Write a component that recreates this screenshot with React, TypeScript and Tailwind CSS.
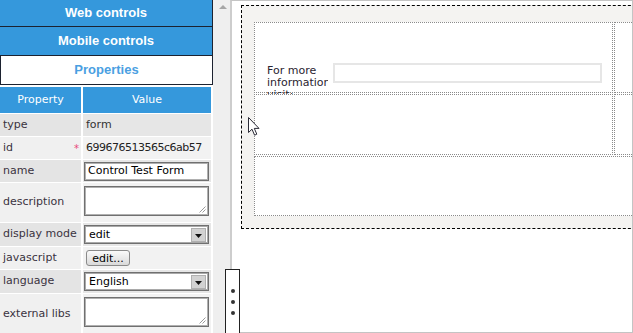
import React from "react";

const cellFont = "font-['DejaVu_Sans',Verdana,sans-serif]";
const headFont = "font-['Liberation_Sans',Arial,sans-serif]";

function Grip() {
  return (
    <svg width="7" height="7" viewBox="0 0 7 7" className="absolute right-[2px] bottom-[2px]">
      <line x1="6.5" y1="0.5" x2="0.5" y2="6.5" stroke="#9a9a9a" strokeWidth="1" />
      <line x1="6.5" y1="3.5" x2="3.5" y2="6.5" stroke="#9a9a9a" strokeWidth="1" />
    </svg>
  );
}

function Select({ value }: { value: string }) {
  return (
    <div className="ml-[1px] w-[125px] h-[19px] border border-[#707070] shadow-[inset_0_0_0_1px_#a9a9a9] bg-white flex items-center">
      <span className="pl-[4px] flex-1 text-[11px] text-black leading-none">{value}</span>
      <div className="w-[15px] h-[14px] mr-[2px] bg-[#d2d2d2] border border-[#b0b0b0] flex items-end justify-center pb-[3px]">
        <svg width="7" height="4" viewBox="0 0 7 4">
          <polygon points="0,0 7,0 3.5,4" fill="#111" />
        </svg>
      </div>
    </div>
  );
}

type Row = { label: string; h: number; dark: boolean; value: React.ReactNode; top?: boolean };

export default function App() {
  const rows: Row[] = [
    { label: "type", h: 22, dark: true, value: <span className="pl-[3px] text-[#333]">form</span> },
    {
      label: "id",
      h: 22,
      dark: false,
      value: (
        <span className="pl-[3px] whitespace-nowrap tracking-[-0.5px] text-[#222]">699676513565c6ab57</span>
      ),
    },
    {
      label: "name",
      h: 22,
      dark: true,
      value: (
        <div className="ml-[1px] w-[125px] h-[19px] border border-[#707070] shadow-[inset_0_0_0_1px_#b0b0b0] bg-white flex items-center pl-[3px] text-[11px] text-black whitespace-nowrap overflow-hidden">
          Control Test Form
        </div>
      ),
    },
    {
      label: "description",
      h: 39,
      dark: false,
      top: true,
      value: (
        <div className="relative ml-[1px] w-[125px] h-[30px] border border-[#707070] shadow-[inset_0_0_0_1px_#b0b0b0] bg-white">
          <Grip />
        </div>
      ),
    },
    { label: "display mode", h: 23, dark: true, value: <Select value="edit" /> },
    {
      label: "javascript",
      h: 22,
      dark: false,
      value: (
        <div className="ml-[3px] w-[44px] h-[16px] rounded-[3px] border border-[#8a8a8a] bg-gradient-to-b from-[#fafafa] to-[#d9d9d9] flex items-center justify-center text-[11px] text-black leading-none">
          edit...
        </div>
      ),
    },
    { label: "language", h: 23, dark: true, value: <Select value="English" /> },
    {
      label: "external libs",
      h: 40,
      dark: false,
      top: true,
      value: (
        <div className="relative ml-[1px] w-[125px] h-[30px] border border-[#707070] shadow-[inset_0_0_0_1px_#b0b0b0] bg-white">
          <Grip />
        </div>
      ),
    },
  ];

  return (
    <div className={`relative w-[633px] h-[333px] overflow-hidden bg-white flex ${cellFont}`}>
      {/* Left panel */}
      <div className="w-[213px] shrink-0 flex flex-col bg-white">
        <div
          className={`h-[27px] shrink-0 bg-[#3598dc] border-b border-r border-[#1c2230] text-white font-bold text-[13px] flex items-center justify-center ${headFont}`}
        >
          Web controls
        </div>
        <div
          className={`h-[29px] shrink-0 bg-[#3598dc] border-b border-r border-[#1c2230] text-white font-bold text-[13px] flex items-center justify-center ${headFont}`}
        >
          Mobile controls
        </div>
        <div
          className={`h-[29px] shrink-0 bg-white border-b border-x border-[#1c2230] text-[#4a9fe2] font-bold text-[13px] flex items-center justify-center ${headFont}`}
        >
          Properties
        </div>
        <div className="mt-[2px] grid grid-cols-[81px_128px] gap-x-[2px] gap-y-[1px] text-[11px]">
          <div className="h-[26px] bg-[#3598dc] text-white text-[11px] flex items-center justify-center">Property</div>
          <div className="h-[26px] bg-[#3598dc] text-white text-[11px] flex items-center justify-center">Value</div>
          {rows.map((r) => (
            <React.Fragment key={r.label}>
              <div
                style={{ height: r.h }}
                className={`relative flex items-center pl-[3px] text-[#3a3340] whitespace-nowrap ${
                  r.dark ? "bg-[#e4e4e4]" : "bg-[#f0f0f0]"
                }`}
              >
                {r.label}
                {r.label === "id" && (
                  <span className="absolute left-[74px] top-[4px] text-[#e8457a] text-[10px]">*</span>
                )}
              </div>
              <div
                style={{ height: r.h }}
                className={`flex overflow-hidden ${r.top ? "items-start pt-[3px]" : "items-center"} ${
                  r.dark ? "bg-[#e6e6e6]" : "bg-[#f2f2f2]"
                }`}
              >
                {r.value}
              </div>
            </React.Fragment>
          ))}
        </div>
      </div>

      {/* Gutter */}
      <div className="w-[17px] shrink-0 bg-[#efefef]" />

      {/* Canvas */}
      <div className="flex-1 min-w-0 h-[333px] overflow-hidden bg-white border border-[#c4c4c4] border-l-2 border-l-[#cdcdcd]">
        <div className="ml-[9px] mt-[4px] w-[420px] h-[224px] border border-dashed border-black bg-[#f4f3f1] pt-[16px] pl-[12px] pb-[12px]">
          <div className="bg-white flex flex-col gap-[1px] h-[194px]">
            <div className="flex gap-[1px] h-[71px]">
              <div className="w-[359px] h-full border border-dotted border-[#8b8b8b] flex items-start pl-[12px] pt-[40px]">
                <div className="mt-[2px] w-[61px] h-[29px] overflow-hidden text-[11px] leading-[12px] text-[#2a2430]">
                  For more information visit:
                </div>
                <div className="ml-[5px] w-[269px] h-[20px] border-2 border-[#e6e6e6] bg-white" />
              </div>
              <div className="flex-1 h-full border border-dotted border-[#8b8b8b]" />
            </div>
            <div className="flex gap-[1px] h-[61px]">
              <div className="w-[359px] h-full border border-dotted border-[#8b8b8b]" />
              <div className="flex-1 h-full border border-dotted border-[#8b8b8b]" />
            </div>
            <div className="h-[60px] border border-dotted border-[#8b8b8b]" />
          </div>
        </div>
      </div>

      {/* Scroll arrow */}
      <svg className="absolute left-[219px] top-[5px]" width="8" height="4" viewBox="0 0 8 4">
        <polygon points="0,4 8,4 4,0" fill="#a6a6a6" />
      </svg>

      {/* Splitter handle */}
      <div className="absolute left-[225px] top-[269px] w-[15px] h-[70px] bg-white border border-[#222] flex flex-col items-center pt-[19px] gap-[7px]">
        <div className="w-[4px] h-[4px] rounded-full bg-[#333]" />
        <div className="w-[4px] h-[4px] rounded-full bg-[#333]" />
        <div className="w-[4px] h-[4px] rounded-full bg-[#333]" />
      </div>

      {/* Mouse cursor */}
      <svg className="absolute left-[248px] top-[117px]" width="13" height="20" viewBox="0 0 13 20">
        <path
          d="M0.5,0.5 L0.5,15.5 L4,12.2 L6.6,18.2 L8.8,17.2 L6.3,11.4 L11,11.4 Z"
          fill="#fff"
          stroke="#2a2a36"
          strokeWidth="1"
          strokeLinejoin="miter"
        />
      </svg>
    </div>
  );
}
